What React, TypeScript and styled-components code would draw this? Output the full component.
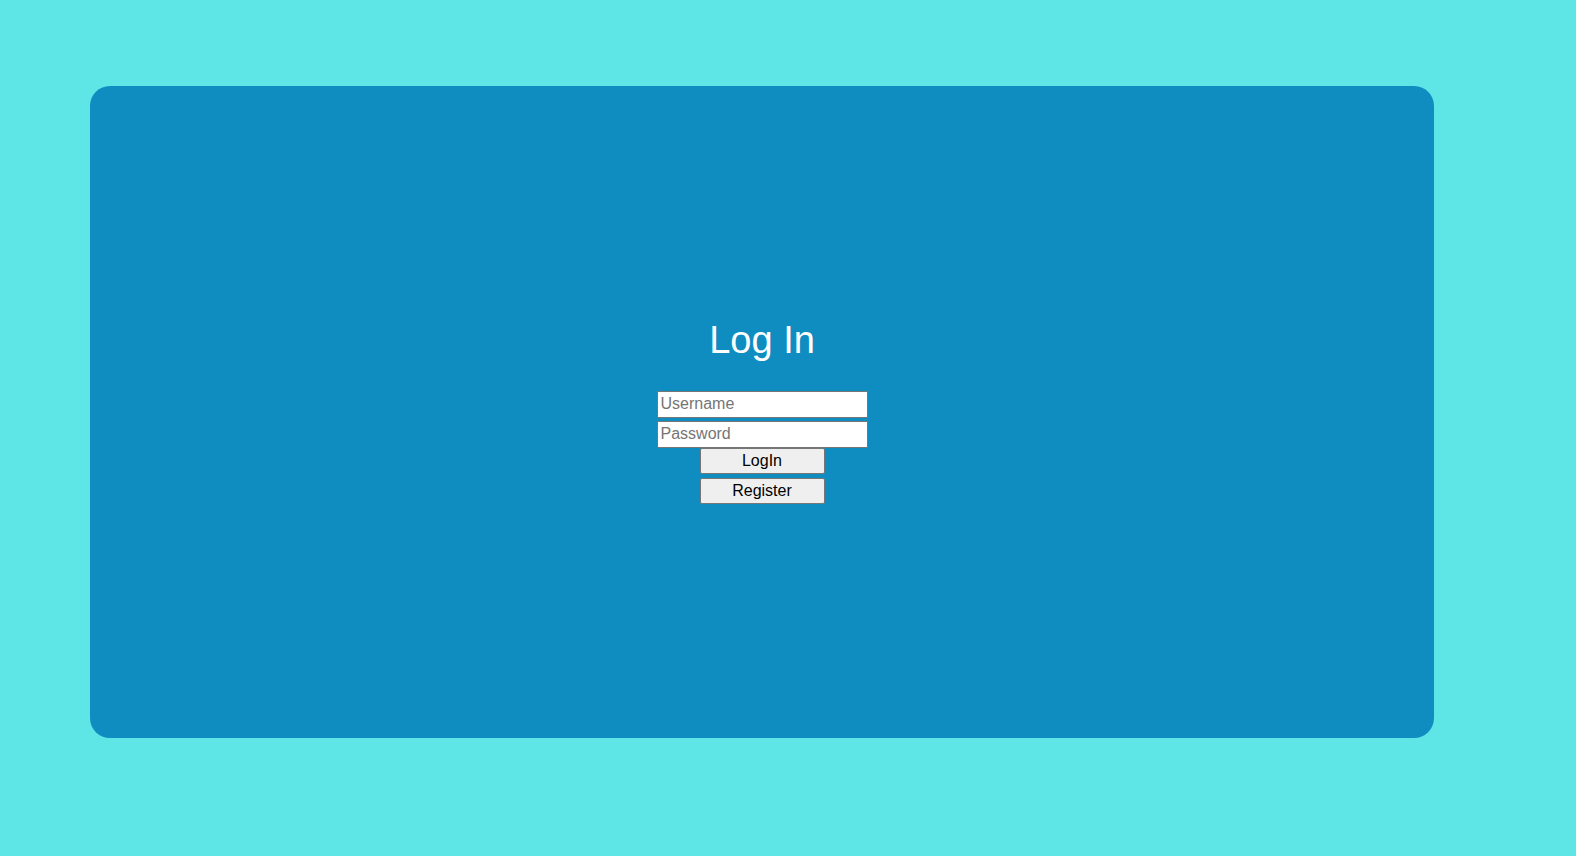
import React from "react";
import styled, { createGlobalStyle } from "styled-components";

const GlobalStyle = createGlobalStyle`
  html, body {
    margin: 0;
    padding: 0;
    background: #5ee6e6;
    font-family: "Liberation Sans", Arial, sans-serif;
  }
  * { box-sizing: border-box; }
`;

const Page = styled.div`
  width: 1576px;
  height: 856px;
  padding: 86px 0 0 90px;
  background: #5ee6e6;
`;

const Card = styled.div`
  width: 1344px;
  height: 652px;
  padding-bottom: 2px;
  background: #0f8dc1;
  border-radius: 20px;
  display: flex;
  flex-direction: column;
  align-items: center;
  justify-content: center;
`;

const Title = styled.h1`
  margin: 0 0 29px;
  font-size: 38px;
  font-weight: 400;
  line-height: normal;
  color: #ffffff;
  font-family: "Liberation Sans", Arial, sans-serif;
`;

const Form = styled.form`
  display: flex;
  flex-direction: column;
  align-items: center;
`;

const Input = styled.input<{ $gap: number }>`
  width: 211px;
  height: 27px;
  margin: 0 0 ${(p) => p.$gap}px;
  padding: 1px 3px;
  border: 1px solid #767676;
  background: #ffffff;
  font-family: "Liberation Sans", Arial, sans-serif;
  font-size: 16px;
  color: #000;
  outline: none;
  &::placeholder {
    color: #757575;
  }
`;

const Button = styled.button<{ $gap: number }>`
  width: 125px;
  height: 26px;
  margin: 0 0 ${(p) => p.$gap}px;
  padding: 0 6px;
  border: 1px solid #767676;
  border-radius: 2px;
  background: #efefef;
  font-family: "Liberation Sans", Arial, sans-serif;
  font-size: 16px;
  line-height: 22px;
  color: #000;
  cursor: pointer;
`;

export default function App() {
  return (
    <>
      <GlobalStyle />
      <Page>
        <Card>
          <Title>Log In</Title>
          <Form onSubmit={(e) => e.preventDefault()}>
            <Input $gap={3} type="text" placeholder="Username" />
            <Input $gap={0} type="password" placeholder="Password" />
            <Button $gap={4} type="submit">LogIn</Button>
            <Button $gap={0} type="button">Register</Button>
          </Form>
        </Card>
      </Page>
    </>
  );
}
